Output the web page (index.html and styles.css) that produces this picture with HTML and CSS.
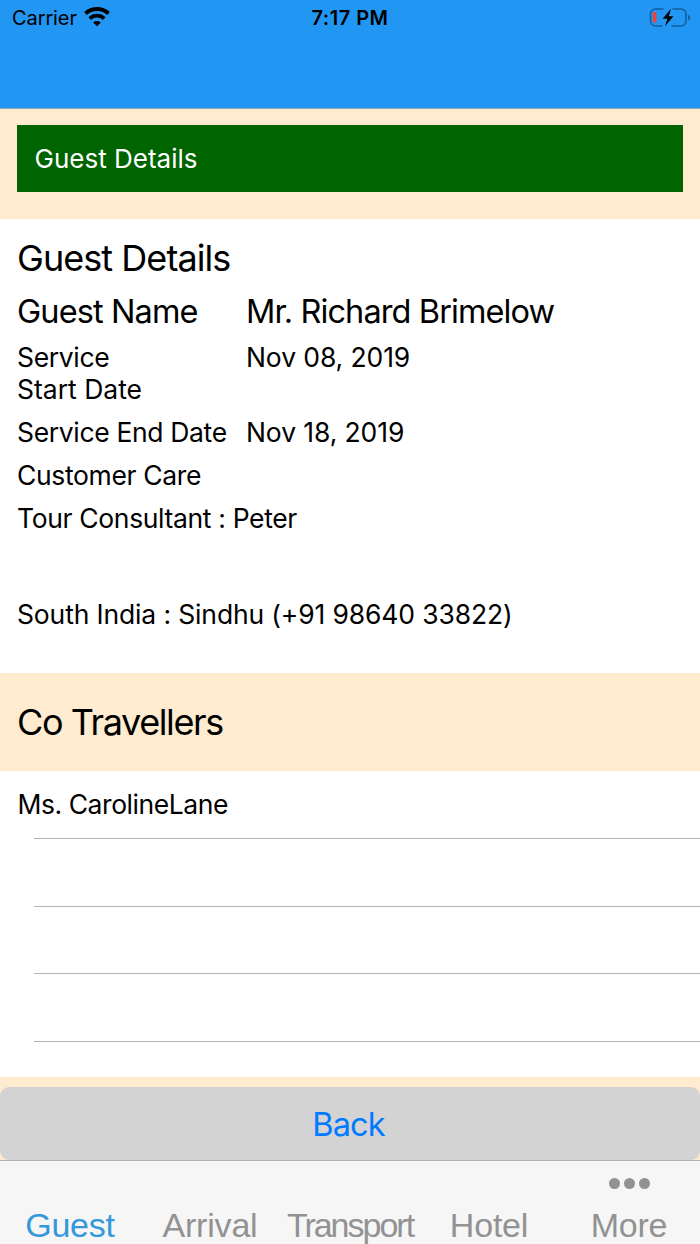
FILE: index.html
```html
<!DOCTYPE html>
<html lang="en">
  <head>
    <meta charset="utf-8">
    <title>Guest Details</title>
    <link rel="stylesheet" href="styles.css">
  </head>
  <body>
    <div class="container">
      <div class="header">
        <div class="status">
          <div class="carrier">
            <span class="carrierName">Carrier</span>
            <svg class="wifi" width="26" height="20" viewBox="0 0 26 20">
              <path d="M1.5 6.5 A17 17 0 0 1 24.5 6.5" fill="none" stroke="#000" stroke-width="4"/>
              <path d="M5.8 11.6 A10.4 10.4 0 0 1 20.2 11.6" fill="none" stroke="#000" stroke-width="3.7"/>
              <path d="M9.2 15.4 A5.6 5.6 0 0 1 16.8 15.4 L13 19.2 Z"/>
            </svg>
          </div>
          <div class="time">7:17 PM</div>
          <div class="power">
            <svg width="42" height="22" viewBox="0 0 42 22">
              <path d="M14.5 2 H6.5 A5 5 0 0 0 1.5 7 V14 A5 5 0 0 0 6.5 19 H13.2 M23.5 2 H32 A5 5 0 0 1 37 7 V14 A5 5 0 0 1 32 19 H22.5" fill="none" stroke="#155f9c" stroke-width="1.6"/>
              <path d="M39.2 7.5 Q41.3 8.5 41.3 10.5 T39.2 13.7 Z" fill="#155f9c"/>
              <rect x="4" y="5" width="3.4" height="10.5" rx="1" fill="#ff3b30"/>
              <path d="M22 1.8 L13.6 11.8 H18.4 L16 19.2 L24.4 9.2 H19.8 Z"/>
            </svg>
          </div>
        </div>
      </div>
      <div class="banner">
        <div class="bannerTitle"><span>Guest Details</span></div>
      </div>
      <div class="details">
        <div class="title">Guest Details</div>
        <div class="row name">
          <div class="label">Guest Name</div>
          <div class="value">Mr. Richard Brimelow</div>
        </div>
        <div class="row start">
          <div class="label">Service<br><span class="startDate">Start Date</span></div>
          <div class="value">Nov 08, 2019</div>
        </div>
        <div class="row">
          <div class="label">Service End Date</div>
          <div class="value">Nov 18, 2019</div>
        </div>
        <div class="row">Customer Care</div>
        <div class="row consultant">Tour Consultant : Peter</div>
        <div class="row phone">South India : Sindhu (+91 98640 33822)</div>
      </div>
      <div class="travellers">Co Travellers</div>
      <div class="list">
        <div class="item">Ms. CarolineLane</div>
        <div class="item"></div>
        <div class="item"></div>
        <div class="item"></div>
      </div>
      <div class="footer">
        <div class="back">Back</div>
      </div>
      <div class="tabs">
        <div class="tab active">Guest</div>
        <div class="tab">Arrival</div>
        <div class="tab transport">Transport</div>
        <div class="tab hotel">Hotel</div>
        <div class="tab more">
          <div class="dots"><i></i><i></i><i></i></div>
          More
        </div>
      </div>
    </div>
  </body>
</html>
```

FILE: styles.css
```css
* {
  margin: 0;
  box-sizing: border-box;
}
body {
  font-family: Inter, "Liberation Sans", sans-serif;
  color: black;
  background-color: white;
}
.container {
  width: 700px;
  height: 1244px;
  display: flex;
  flex-direction: column;
  overflow: hidden;
}
.header {
  height: 108.5px;
  flex: none;
  background-color: #2296f3;
  border-bottom: 1px solid #8da5b5;
}
.status {
  display: grid;
  grid-template-columns: 1fr auto 1fr;
  height: 36px;
  padding: 0 9px 0 12px;
  line-height: 36px;
  font-size: 20px;
}
.carrier {
  display: flex;
  align-items: center;
  gap: 7px;
  letter-spacing: -0.1px;
}
.wifi {
  margin-bottom: 3px;
}
.time {
  font-weight: 600;
  letter-spacing: 0.5px;
  margin-left: -3px;
}
.power {
  display: flex;
  justify-content: flex-end;
  align-items: center;
}
.banner {
  height: 110px;
  flex: none;
  padding: 16.5px 17px 0;
  background-color: #ffebcf;
}
.bannerTitle {
  height: 66.5px;
  padding-left: 17.5px;
  line-height: 67px;
  font-size: 26px;
  color: white;
  background-color: #006400;
}
.details {
  height: 454px;
  flex: none;
  display: flex;
  flex-direction: column;
  gap: 10.8px;
  padding: 17.5px 17px 0;
}
.title {
  font-size: 36px;
  line-height: 44px;
  letter-spacing: -0.95px;
  margin-bottom: 1px;
}
.row {
  display: flex;
  font-size: 26.5px;
  line-height: 32px;
  letter-spacing: -0.35px;
}
.name {
  font-size: 32.5px;
  line-height: 39px;
  letter-spacing: -0.9px;
  margin-bottom: -1px;
}
.start {
  margin-bottom: 0.7px;
}
.startDate {
  letter-spacing: 0;
}
.label {
  width: 229px;
  white-space: nowrap;
}
.row:not(.name) .value {
  letter-spacing: -0.1px;
}
.consultant {
  margin-bottom: 53.6px;
}
.phone {
  letter-spacing: -0.14px;
}
.travellers {
  height: 98.5px;
  flex: none;
  padding-left: 17px;
  line-height: 99px;
  font-size: 36px;
  letter-spacing: -1.4px;
  background-color: #ffebcf;
}
.list {
  height: 305.5px;
  flex: none;
  padding-left: 34px;
}
.item {
  height: 67.8px;
  border-bottom: 1px solid #b5b4b8;
  line-height: 67px;
  font-size: 26.5px;
  letter-spacing: -0.45px;
  text-indent: -16.5px;
}
.footer {
  height: 83.5px;
  flex: none;
  padding-top: 10px;
  background-color: #ffebcf;
}
.back {
  height: 73.5px;
  border-radius: 9px;
  background-color: #d3d3d3;
  color: #007aff;
  font-size: 32.5px;
  line-height: 75px;
  letter-spacing: -0.9px;
  text-align: center;
  padding-right: 3px;
}
.tabs {
  flex: 1;
  display: grid;
  grid-template-columns: repeat(5, 1fr);
  border-top: 1px solid #b2b2b2;
  background-color: #f6f6f6;
  font-family: "Liberation Sans", Arial, sans-serif;
  font-size: 34px;
  line-height: 38px;
  letter-spacing: -0.2px;
  color: #929292;
}
.tab {
  display: flex;
  flex-direction: column;
  justify-content: flex-end;
  align-items: center;
}
.active {
  color: #3498db;
}
.transport {
  letter-spacing: -2px;
}
.hotel,
.more {
  padding-right: 2px;
}
.dots {
  display: flex;
  gap: 4px;
  margin: 0 0 17px 1px;
}
.dots i {
  width: 11px;
  height: 11px;
  border-radius: 50%;
  background-color: #929292;
}
```
